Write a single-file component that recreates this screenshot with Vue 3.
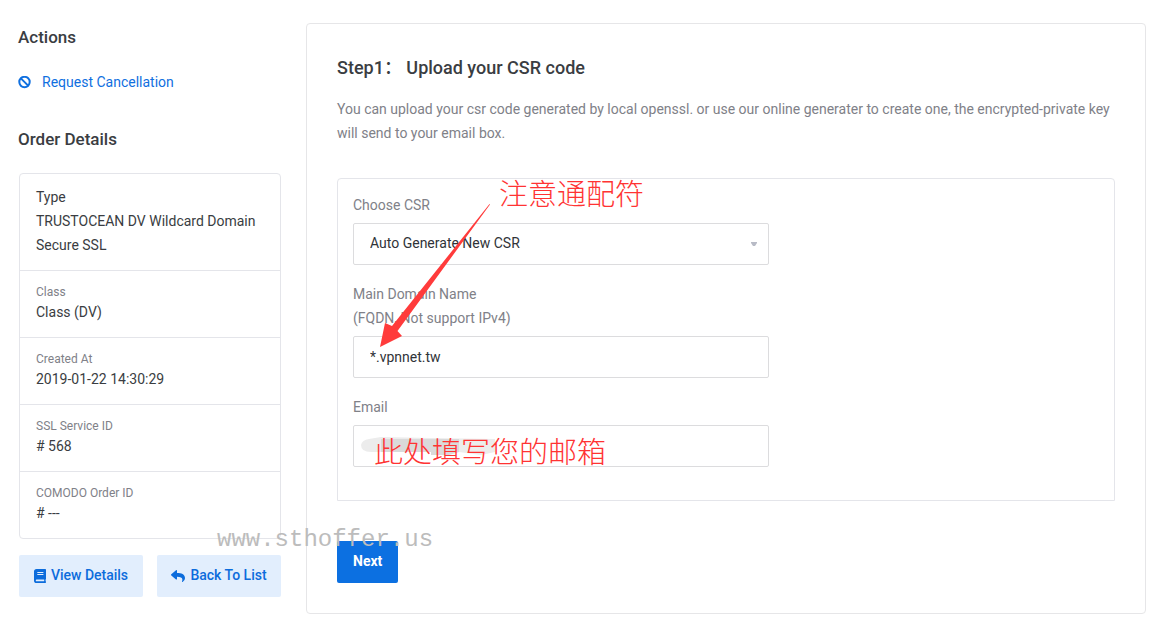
<script setup>
import { ref } from 'vue'

const details = [
  { label: 'Class', value: 'Class (DV)' },
  { label: 'Created At', value: '2019-01-22 14:30:29' },
  { label: 'SSL Service ID', value: '# 568' },
  { label: 'COMODO Order ID', value: '# ---' },
]
const csr = ref('auto')
const domain = ref('*.vpnnet.tw')
const email = ref('')
</script>

<template>
  <div class="page">
    <aside class="sidebar">
      <h2>Actions</h2>
      <a class="action" href="#">
        <svg width="13" height="13" viewBox="0 0 13 13" aria-hidden="true">
          <circle cx="6.5" cy="6" r="5.2" fill="none" stroke="currentColor" stroke-width="2" />
          <path d="M2.9 2.4 10.1 9.6" stroke="currentColor" stroke-width="2" />
        </svg>
        <span>Request Cancellation</span>
      </a>
      <h2>Order Details</h2>
      <div class="order">
        <dl class="panel">
          <div class="entry">
            <dt>Type</dt>
            <dd>TRUSTOCEAN DV Wildcard Domain Secure SSL</dd>
          </div>
          <div v-for="d in details" :key="d.label" class="entry">
            <dt class="small">{{ d.label }}</dt>
            <dd>{{ d.value }}</dd>
          </div>
        </dl>
        <div class="buttons">
          <button type="button" class="soft">
            <svg width="12" height="14" viewBox="0 0 12 14" aria-hidden="true">
              <path
                fill="currentColor"
                fill-rule="evenodd"
                d="M2.6 0H11.3Q12 0 12 .7V9.8Q12 10.2 11.6 10.5V12.3Q12 12.4 12 12.8V13.3Q12 14 11.3 14H2.6Q0 14 0 11.4V2.6Q0 0 2.6 0ZM3.3 3V4H9.4V3ZM3.3 5V6H9.4V5ZM2.6 10.6Q1.8 10.6 1.8 11.4T2.6 12.3H10.2V10.6Z"
              />
            </svg>
            <span>View Details</span>
          </button>
          <button type="button" class="soft">
            <svg width="14" height="12" viewBox="0 0 14 12" aria-hidden="true">
              <path
                fill="currentColor"
                d="M.3 4.3 5 .3C5.5-.1 6 .2 6 .8V2.9C10.400 3 14 3.900 14 8.100 14 9.800 12.900 11.100 11.700 11.900 11.300 12.200 10.900 11.900 11 11.400 12.200 7.700 10.400 6.800 6 6.700V8.900C6 9.500 5.500 9.800 5 9.400L.3 5.400C-.1 5-.1 4.600.3 4.300Z"
              />
            </svg>
            <span>Back To List</span>
          </button>
        </div>
      </div>
    </aside>

    <main class="card">
      <h1>Step1： Upload your CSR code</h1>
      <p class="intro">
        You can upload your csr code generated by local openssl. or use our online generater to
        create one, the encrypted-private key will send to your email box.
      </p>
      <form @submit.prevent>
        <div class="box">
          <div class="field">
            <label for="csr">Choose CSR</label>
            <div class="select">
              <select id="csr" v-model="csr">
                <option value="auto">Auto Generate New CSR</option>
              </select>
              <svg class="caret" width="6" height="4" viewBox="0 0 6 4" aria-hidden="true">
                <path fill="currentColor" d="M0 0H6V1L4 4H2L0 1Z" />
              </svg>
            </div>
          </div>
          <div class="field">
            <label for="domain">Main Domain Name<br />(FQDN, Not support IPv4)</label>
            <input id="domain" v-model="domain" type="text" />
          </div>
          <div class="field">
            <label for="email">Email</label>
            <input id="email" v-model="email" type="email" />
          </div>

          <svg class="arrow" width="111" height="144" viewBox="0 0 111 144" aria-hidden="true">
            <path fill="#ff3b3b" d="M109.500 0 110 .5 17.500 127 22 132 0 143 5 119 12 122Z" />
          </svg>
          <svg class="smear" width="134" height="20" viewBox="0 0 134 20" aria-hidden="true">
            <path fill="#ececec" d="M8 3 20 1 70 2 134 3V16L120 19 98 16H10Q0 16 0 9 1 4 8 3Z" />
            <path fill="#dadada" d="M20 3H98V16L88 19H70V16H20Z" />
          </svg>
          <span class="note wildcard">注意通配符</span>
          <span class="note mailbox">此处填写您的邮箱</span>
        </div>
        <button type="submit" class="next">Next</button>
      </form>
    </main>

    <div class="watermark">www.sthoffer.us</div>
  </div>
</template>

<style>
body {
  background: #fff;
}
</style>

<style scoped>
* {
  box-sizing: border-box;
}

.page {
  position: relative;
  display: flex;
  align-items: flex-start;
  gap: 25px;
  padding: 23px 5px 7px 18px;
  font: 14px/24px Roboto, "Noto Sans CJK SC", sans-serif;
  color: #3a3d42;
}

.sidebar {
  flex: 0 0 263px;
  padding-top: 2px;
}

h1,
h2,
p,
dl,
dd {
  margin: 0;
}

h2 {
  font-size: 17px;
  line-height: 24px;
  font-weight: 500;
}

.action {
  display: flex;
  align-items: center;
  gap: 11px;
  margin: 21px 0 33px;
  color: #1070e0;
  text-decoration: none;
}

.order {
  margin: 22px 0 0 1px;
}

.panel {
  border: 1px solid #e4e5ea;
  border-radius: 4px;
}

.entry {
  padding: 11px 16px 13px;
}

.entry + .entry {
  padding-top: 12px;
  padding-bottom: 12px;
  border-top: 1px solid #e4e5ea;
}

dd {
  line-height: 24px;
}

.small {
  font-size: 12px;
  line-height: 18px;
  color: #808188;
}

.small + dd {
  line-height: 22px;
  padding-bottom: 2px;
}

.buttons {
  display: flex;
  gap: 14px;
  margin-top: 16px;
}

button {
  height: 42px;
  border: 0;
  border-radius: 2px;
  font: 500 14px/24px Roboto, sans-serif;
  cursor: pointer;
}

.soft {
  flex: 1;
  display: flex;
  align-items: center;
  justify-content: center;
  gap: 5px;
  padding: 0 0 2px;
  background: #e2eefd;
  color: #0c6cdc;
}

.soft svg {
  margin-top: 2px;
}

.card {
  flex: 1;
  min-width: 0;
  padding: 30px;
  border: 1px solid #e6e6e8;
  border-radius: 4px;
}

h1 {
  font-size: 18px;
  line-height: 28px;
  font-weight: 500;
}

.intro {
  margin: 15px 0 33px;
  color: #808188;
}

.box {
  position: relative;
  display: flex;
  flex-direction: column;
  gap: 17px;
  padding: 14px 15px 33px;
  border: 1px solid #e4e5ea;
  border-radius: 4px 4px 0 0;
}

.field {
  display: flex;
  flex-direction: column;
  gap: 6px;
  max-width: 416px;
}

label {
  color: #808188;
}

.select {
  position: relative;
}

select,
input {
  display: block;
  width: 100%;
  height: 42px;
  padding: 0 16px;
  border: 1px solid #dcdcde;
  border-radius: 2px;
  appearance: none;
  background: #fff;
  font: 14px/24px Roboto, sans-serif;
  color: #303338;
}

select {
  padding-bottom: 2px;
}

.caret {
  position: absolute;
  right: 12px;
  top: 19px;
  color: #b8bbc6;
}

.arrow {
  position: absolute;
  left: 42px;
  top: 25px;
}

.smear {
  position: absolute;
  left: 23px;
  top: 257px;
}

.note {
  position: absolute;
  font: 300 29px/36px "Noto Sans CJK SC", sans-serif;
  color: #ff3333;
  white-space: nowrap;
}

.wildcard {
  left: 161px;
  top: -5px;
}

.mailbox {
  left: 36px;
  top: 253px;
}

.next {
  display: block;
  margin-top: 40px;
  padding: 0 16px 2px;
  background: #0c70e1;
  color: #fff;
  font-weight: 700;
}

.watermark {
  position: absolute;
  left: 217px;
  top: 526px;
  font: 24px/28px "Liberation Mono", monospace;
  color: #bcbcbc;
  pointer-events: none;
}
</style>
